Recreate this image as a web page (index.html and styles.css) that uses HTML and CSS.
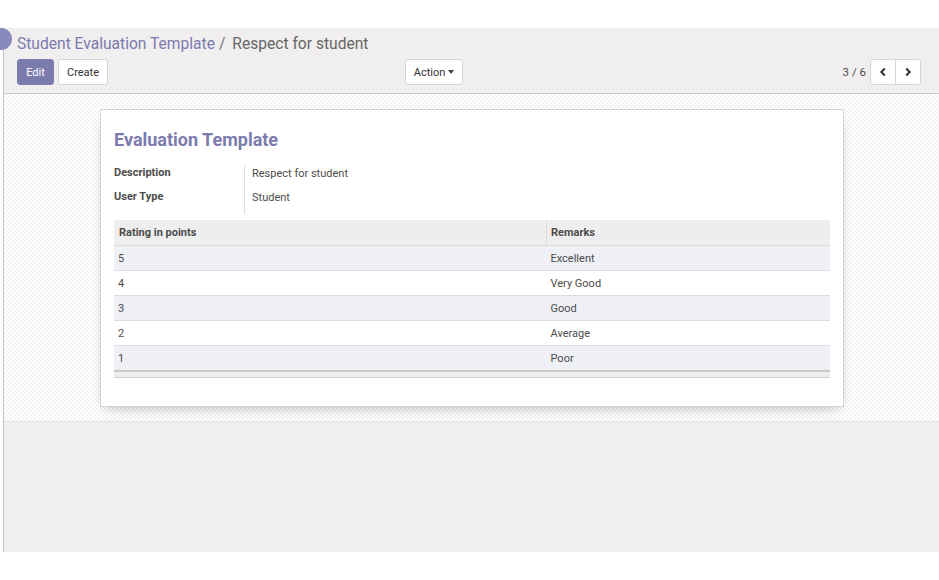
FILE: index.html
```html
<!DOCTYPE html>
<html>
<head>
<meta charset="utf-8">
<link rel="stylesheet" href="styles.css">
</head>
<body>
<div class="topband"></div>
<div class="app">
  <div class="app-badge"></div>
  <div class="control-panel">
    <div class="breadcrumb">
      <a class="crumb-link">Student Evaluation Template</a><span class="crumb-sep">/</span><span class="crumb-active">Respect for student</span>
    </div>
    <div class="cp-row">
      <div class="cp-buttons">
        <button class="btn btn-primary">Edit</button>
        <button class="btn btn-default">Create</button>
      </div>
      <div class="cp-sidebar">
        <button class="btn btn-default btn-action">Action <span class="caret"></span></button>
      </div>
      <div class="cp-pager">
        <span class="pager-value">3 / 6</span>
        <div class="pager-buttons">
          <button class="btn btn-default pager-btn"><svg width="10" height="10" viewBox="0 0 10 10"><path d="M6.8 1.5 L3.3 5 L6.8 8.5" fill="none" stroke="#333" stroke-width="2"/></svg></button>
          <button class="btn btn-default pager-btn"><svg width="10" height="10" viewBox="0 0 10 10"><path d="M3.2 1.5 L6.7 5 L3.2 8.5" fill="none" stroke="#333" stroke-width="2"/></svg></button>
        </div>
      </div>
    </div>
  </div>
  <div class="sheet-bg">
    <div class="sheet">
      <h1 class="title">Evaluation Template</h1>
      <div class="fields">
        <div class="field-labels">
          <div class="label">Description</div>
          <div class="label">User Type</div>
        </div>
        <div class="field-values">
          <div class="value">Respect for student</div>
          <div class="value">Student</div>
        </div>
      </div>
      <table class="grid">
        <thead>
          <tr><th class="col1">Rating in points</th><th class="col2">Remarks</th></tr>
        </thead>
        <tbody>
          <tr class="odd"><td>5</td><td>Excellent</td></tr>
          <tr><td>4</td><td>Very Good</td></tr>
          <tr class="odd"><td>3</td><td>Good</td></tr>
          <tr><td>2</td><td>Average</td></tr>
          <tr class="odd"><td>1</td><td>Poor</td></tr>
        </tbody>
        <tfoot>
          <tr><td></td><td></td></tr>
        </tfoot>
      </table>
    </div>
  </div>
  <div class="rest"></div>
</div>
</body>
</html>
```

FILE: styles.css
```css
html, body {
  margin: 0;
  padding: 0;
  background: #ffffff;
  font-family: Roboto, "Liberation Sans", sans-serif;
  font-size: 11px;
  color: #4c4c4c;
}
.topband {
  height: 28px;
  background: #ffffff;
}
.app {
  position: relative;
  margin-left: 3px;
  border-left: 1px solid #c4c4c4;
  background: #f0eeee;
  height: 524px;
  display: flex;
  flex-direction: column;
}
.app-badge {
  position: absolute;
  left: -14px;
  top: 0;
  width: 22px;
  height: 22px;
  border-radius: 50%;
  background: #8a89bb;
}
.control-panel {
  padding: 4px 18px 8px 13px;
  border-bottom: 1px solid #c9c9c9;
  background: #f0eeee;
}
.breadcrumb {
  height: 24px;
  line-height: 24px;
  font-size: 15.6px;
  margin-bottom: 3px;
  white-space: nowrap;
}
.crumb-link { color: #7c7bad; }
.crumb-sep { color: #777; margin: 0 7px 0 4px; }
.crumb-active { color: #666; }
.cp-row {
  display: grid;
  grid-template-columns: 388px 1fr auto;
  align-items: center;
  height: 26px;
}
.cp-buttons {
  display: flex;
  gap: 4px;
}
.btn {
  height: 26px;
  box-sizing: border-box;
  font-family: Roboto, "Liberation Sans", sans-serif;
  font-size: 11px;
  border-radius: 3px;
  padding: 0 8px;
  cursor: pointer;
}
.btn-primary {
  background: #7c7bad;
  border: 1px solid #7c7bad;
  color: #ffffff;
  width: 37px;
  padding: 0;
}
.btn-default {
  background: #ffffff;
  border: 1px solid #d5d5d5;
  color: #333;
}
.btn-action {
  width: 58px;
  padding: 0;
  display: flex;
  align-items: center;
  justify-content: center;
  gap: 3px;
}
.caret {
  display: inline-block;
  width: 0;
  height: 0;
  border-left: 3.5px solid transparent;
  border-right: 3.5px solid transparent;
  border-top: 4px solid #444;
}
.cp-pager {
  display: flex;
  align-items: center;
  gap: 4px;
}
.pager-value {
  color: #4c4c4c;
  font-size: 11.5px;
}
.pager-buttons {
  display: flex;
}
.pager-btn {
  width: 26px;
  padding: 0;
  display: flex;
  align-items: center;
  justify-content: center;
}
.pager-btn:first-child {
  border-radius: 3px 0 0 3px;
}
.pager-btn:last-child {
  border-radius: 0 3px 3px 0;
  margin-left: -1px;
}
.sheet-bg {
  padding: 15px 94px 14px 96px;
  background-color: #ffffff;
  background-image: repeating-conic-gradient(#f3f3f3 0 25%, #ffffff 0 50%);
  background-size: 4px 4px;
  border-bottom: 1px solid #e2e2e2;
}
.sheet {
  background: #ffffff;
  border: 1px solid #d4d4d8;
  box-shadow: 0 5px 12px -6px rgba(0,0,0,0.35);
  padding: 14px 13px 28px 13px;
  width: 716px;
}
.title {
  margin: 4px 0 13px 0;
  font-size: 18px;
  font-weight: bold;
  color: #7c7bad;
  line-height: 24px;
}
.fields {
  display: flex;
  margin-bottom: 6px;
}
.field-labels {
  width: 130px;
}
.label {
  font-weight: bold;
  color: #4c4c4c;
  height: 24px;
  line-height: 16px;
}
.field-values {
  border-left: 1px solid #dcdcdc;
  padding-left: 7px;
  padding-top: 1px;
}
.value {
  height: 24px;
  line-height: 16px;
  color: #4c4c4c;
}
.grid {
  width: 716px;
  border-collapse: collapse;
}
.grid th {
  background: #eeeeee;
  height: 25px;
  text-align: left;
  font-weight: bold;
  padding: 0 5px;
  border-bottom: 1px solid #d9d9d9;
  color: #4c4c4c;
}
.grid th.col1 { width: 422px; }
.grid th.col2 { border-left: 1px solid #dfdfdf; padding-left: 4px; }
.grid td {
  height: 24px;
  padding: 0 4px;
  border-bottom: 1px solid #dddddd;
  color: #4c4c4c;
}
.grid tbody tr.odd td { background: #efeff6; }
.grid tbody tr:last-child td { border-bottom: 2px solid #c8c8c8; }
.grid tfoot td {
  height: 5px;
  padding: 0;
  background: #eeeeee;
  border-bottom: 1px solid #cfcfcf;
}
.rest {
  flex: 1;
}
```
